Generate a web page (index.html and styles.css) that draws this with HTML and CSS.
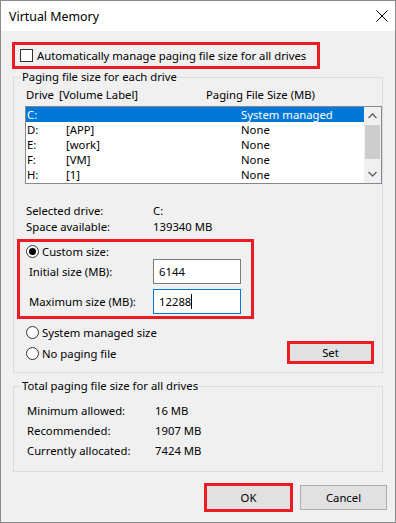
FILE: index.html
```html
<!DOCTYPE html>
<html lang="en">
<head>
    <meta charset="UTF-8">
    <title>Virtual Memory</title>
    <link rel="stylesheet" href="styles.css">
</head>
<body>
    <div class="window">
        <div class="titlebar">
            <span class="title">Virtual Memory</span>
            <svg class="close" width="12" height="12" viewBox="0 0 12 12">
                <path d="M0.5 0.5 L11.5 11.5 M11.5 0.5 L0.5 11.5" stroke="#000" stroke-width="1" fill="none"/>
            </svg>
        </div>

        <div class="dialog">
            <div class="auto-row">
                <span class="checkbox"></span>
                <span>Automatically manage paging file size for all drives</span>
            </div>

            <fieldset class="group drives">
                <legend>Paging file size for each drive</legend>

                <div class="list-head">
                    <span class="col-drive">Drive</span>
                    <span class="col-label">[Volume Label]</span>
                    <span class="col-size">Paging File Size (MB)</span>
                </div>

                <div class="listbox">
                    <ul class="rows">
                        <li class="selected"><span class="col-drive">C:</span><span class="col-label"></span><span class="col-size">System managed</span></li>
                        <li><span class="col-drive">D:</span><span class="col-label">[APP]</span><span class="col-size">None</span></li>
                        <li><span class="col-drive">E:</span><span class="col-label">[work]</span><span class="col-size">None</span></li>
                        <li><span class="col-drive">F:</span><span class="col-label">[VM]</span><span class="col-size">None</span></li>
                        <li><span class="col-drive">H:</span><span class="col-label">[1]</span><span class="col-size">None</span></li>
                    </ul>
                    <div class="scrollbar">
                        <svg class="arrow" width="9" height="6" viewBox="0 0 9 6"><path d="M0.5 5 L4.5 1 L8.5 5" stroke="#606060" stroke-width="1.4" fill="none"/></svg>
                        <div class="thumb"></div>
                        <svg class="arrow down" width="9" height="6" viewBox="0 0 9 6"><path d="M0.5 1 L4.5 5 L8.5 1" stroke="#606060" stroke-width="1.4" fill="none"/></svg>
                    </div>
                </div>

                <div class="info">
                    <div class="pair"><span class="key">Selected drive:</span><span>C:</span></div>
                    <div class="pair"><span class="key">Space available:</span><span>139340 MB</span></div>
                </div>

                <div class="custom">
                    <div class="radio-row">
                        <span class="radio checked"></span>
                        <span>Custom size:</span>
                    </div>
                    <div class="field">
                        <span class="field-label">Initial size (MB):</span>
                        <span class="input">6144</span>
                    </div>
                    <div class="field">
                        <span class="field-label">Maximum size (MB):</span>
                        <span class="input focused">12288<span class="caret"></span></span>
                    </div>
                </div>

                <div class="options">
                    <div class="choices">
                        <div class="radio-row"><span class="radio"></span><span>System managed size</span></div>
                        <div class="radio-row"><span class="radio"></span><span>No paging file</span></div>
                    </div>
                    <button class="btn marked set">Set</button>
                </div>
            </fieldset>

            <fieldset class="group totals">
                <legend>Total paging file size for all drives</legend>
                <div class="pair"><span class="key">Minimum allowed:</span><span>16 MB</span></div>
                <div class="pair"><span class="key">Recommended:</span><span>1907 MB</span></div>
                <div class="pair"><span class="key">Currently allocated:</span><span>7424 MB</span></div>
            </fieldset>

            <div class="actions">
                <button class="btn marked ok">OK</button>
                <button class="btn cancel">Cancel</button>
            </div>
        </div>
    </div>
</body>
</html>
```

FILE: styles.css
```css
* {
    box-sizing: border-box;
}

body {
    margin: 0;
    font-family: "Noto Sans", "Segoe UI", sans-serif;
    font-size: 11.3px;
    color: #000;
}

.window {
    width: 396px;
    height: 523px;
    border: 1px solid #8a8a8a;
    background: #f0f0f0;
}

.titlebar {
    height: 30px;
    background: #fff;
    display: flex;
    align-items: center;
    padding-left: 8px;
    padding-right: 7px;
    font-size: 12.4px;
}

.title {
    flex: 1;
}

.close {
    display: block;
}

.dialog {
    padding-top: 11px;
}

/* red highlight boxes */
.auto-row,
.custom,
.marked {
    border: 3px solid #ed1c24;
}

.auto-row {
    margin-left: 11px;
    width: 308px;
    height: 27px;
    display: flex;
    align-items: center;
    padding-left: 5px;
    gap: 4px;
}

.checkbox {
    width: 13px;
    height: 13px;
    border: 1px solid #333;
    background: #fff;
}

.group {
    margin: 0 0 0 12px;
    width: 370px;
    border: 1px solid #dcdcdc;
    padding: 0;
}

.group legend {
    margin-left: 7px;
    padding: 0 1px;
    line-height: 16px;
}

.drives legend {
    margin-top: 1px;
}

.list-head {
    display: flex;
    margin-top: 2px;
    margin-left: 12px;
    line-height: 16px;
}

.list-head .col-drive {
    width: 33px;
}

.list-head .col-label {
    width: 147px;
}

.listbox {
    margin-top: 3px;
    margin-left: 11px;
    width: 357px;
    height: 78px;
    border: 1px solid #828790;
    background: #fff;
    display: flex;
}

.rows {
    list-style: none;
    margin: 0;
    padding: 0;
    flex: 1;
}

.rows li {
    display: flex;
    height: 15px;
    line-height: 15px;
    padding-left: 1px;
}

.rows li.selected {
    background: #0078d7;
    color: #fff;
}

.rows .col-drive {
    width: 39px;
}

.rows .col-label {
    width: 175px;
}

.scrollbar {
    width: 17px;
    background: #f0f0f0;
    display: flex;
    flex-direction: column;
    align-items: center;
}

.arrow {
    margin-top: 6px;
    margin-bottom: 6px;
}

.arrow.down {
    margin-top: auto;
    margin-bottom: 6px;
}

.thumb {
    width: 15px;
    height: 34px;
    background: #cdcdcd;
}

.info {
    margin-top: 19px;
    margin-left: 12px;
}

.pair {
    display: flex;
    line-height: 16px;
}

.info .key {
    width: 127px;
}

.custom {
    margin-top: 4px;
    margin-left: 3px;
    width: 237px;
    height: 80px;
    padding-top: 1px;
}

.radio-row {
    display: flex;
    align-items: center;
    gap: 3px;
    height: 16px;
    padding-left: 6px;
}

.radio {
    width: 13px;
    height: 13px;
    border: 1px solid #333;
    border-radius: 50%;
    background: #fff;
    display: flex;
    align-items: center;
    justify-content: center;
}

.radio.checked::after {
    content: "";
    width: 7px;
    height: 7px;
    border-radius: 50%;
    background: #000;
}

.field {
    display: flex;
    align-items: center;
    height: 25px;
    padding-left: 9px;
}

.field + .field {
    margin-top: 5px;
}

.field-label {
    width: 124px;
}

.input {
    width: 88px;
    height: 25px;
    border: 1px solid #7a7a7a;
    background: #fff;
    padding-left: 5px;
    display: flex;
    align-items: center;
}

.input.focused {
    border-color: #0078d7;
}

.caret {
    width: 1px;
    height: 15px;
    background: #000;
}

.options {
    display: flex;
    align-items: flex-end;
    justify-content: space-between;
    margin-top: 3px;
    padding-left: 6px;
    padding-right: 8px;
    padding-bottom: 8px;
}

.options .radio-row {
    height: 21px;
}

.btn {
    font: inherit;
    font-weight: normal;
    color: #000;
    background: #e1e1e1;
    border: 1px solid #adadad;
    padding: 0;
}

.btn.marked {
    border: 3px solid #ed1c24;
}

.set {
    width: 87px;
    height: 23px;
}

.totals {
    margin-top: 5px;
    padding-top: 7px;
    padding-bottom: 10px;
}

.totals .pair {
    line-height: 20px;
    padding-left: 13px;
}

.totals .key {
    width: 128px;
}

.actions {
    display: flex;
    justify-content: flex-end;
    align-items: center;
    gap: 7px;
    margin-top: 11px;
    padding-right: 8px;
}

.ok {
    width: 89px;
    height: 29px;
}

.cancel {
    width: 87px;
    height: 25px;
}
```
